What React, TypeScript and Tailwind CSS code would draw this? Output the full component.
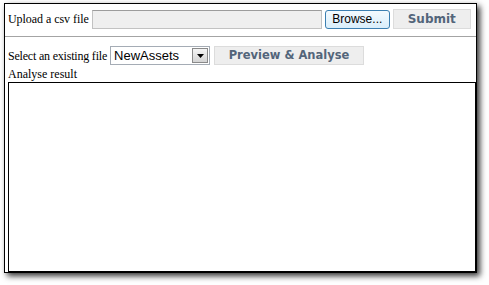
import React from "react";

const serif = "font-['Liberation_Serif',serif]";
const bold = "font-['DejaVu_Sans',Verdana,sans-serif] font-bold text-[#53657a]";

function SelectBox() {
  return (
    <div className="flex h-[19px] w-[100px] items-center border border-[#a5acb5] bg-white pl-[3px] pr-[1px]">
      <span className="flex-1 font-['Liberation_Sans',Arial,sans-serif] text-[13px] leading-none text-black">
        NewAssets
      </span>
      <span className="flex h-[15px] w-[16px] items-center justify-center border border-[#8a8a8a] bg-gradient-to-b from-[#f4f4f4] to-[#d4d4d4]">
        <svg width="7" height="4" viewBox="0 0 7 4">
          <path d="M0 0h7L3.5 4z" fill="#000" />
        </svg>
      </span>
    </div>
  );
}

export default function App() {
  return (
    <div className="h-[285px] w-[489px] bg-white pl-[4px] pt-[3px]">
      <div
        className={`flex h-[270px] w-[473px] flex-col overflow-hidden border border-black bg-white shadow-[3px_3px_6px_rgba(0,0,0,0.8)] ${serif} text-[12px] text-black`}
      >
        <div className="mt-[5px] flex h-[20px] items-center pl-[3px]">
          <span className="leading-none tracking-[-0.05px]">Upload a csv file</span>
          <div className="ml-[3px] h-[19px] w-[230px] border border-[#c2c2c2] border-t-[#9c9c9c] bg-[#efefef]" />
          <button
            type="button"
            className="ml-[3px] flex h-[19px] w-[65px] items-center justify-center rounded-[3px] border border-[#3c7fb1] bg-gradient-to-b from-[#f4fafe] to-[#d9eefb] font-['Liberation_Sans',Arial,sans-serif] text-[12px] leading-none text-black"
          >
            Browse...
          </button>
          <button
            type="button"
            className={`ml-[3px] flex h-[20px] w-[78px] items-center justify-center border border-[#dcdcdc] bg-[#eeeeee] text-[12px] leading-none ${bold}`}
          >
            Submit
          </button>
        </div>

        <div className="mt-[7px] h-0 border-t border-[#a4a4a4]" />

        <div className="mt-[9px] flex h-[19px] items-center pl-[3px]">
          <span className="leading-none tracking-[-0.2px]">Select an existing file</span>
          <div className="ml-[3px]">
            <SelectBox />
          </div>
          <button
            type="button"
            className={`ml-[4px] flex h-[19px] w-[150px] items-center justify-center border border-[#dcdcdc] bg-[#eeeeee] text-[11.5px] leading-none ${bold}`}
          >
            Preview &amp; Analyse
          </button>
        </div>

        <div className="mt-[2px] h-[15px] pl-[3px] leading-[15px]">Analyse result</div>

        <div className="ml-[3px] flex-1 border border-black" />
      </div>
    </div>
  );
}
